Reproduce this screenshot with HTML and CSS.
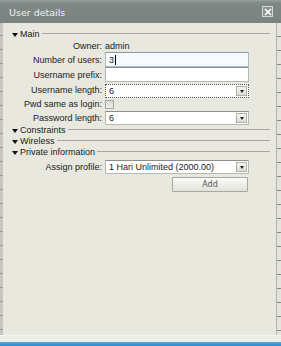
FILE: index.html
```html
<!DOCTYPE html>
<html lang="en">
<head>
    <meta charset="UTF-8">
    <title>User details</title>
    <link rel="stylesheet" href="styles.css">
</head>
<body>
    <div class="screen">
        <div class="dialog">
            <div class="titlebar">
                <span class="title">User details</span>
                <span class="close">
                    <svg width="8" height="8" viewBox="0 0 8 8"><path d="M1 1L7 7M7 1L1 7" stroke="#fff" stroke-width="1.6"/></svg>
                </span>
            </div>
            <div class="frame">
                <div class="edge-left"></div>
                <div class="content">
                    <div class="legend"><span class="arrow"></span>Main</div>
                    <div class="form">
                        <label>Owner:</label>
                        <span class="value">admin</span>

                        <label>Number of users:</label>
                        <div class="input focus">3<span class="caret"></span></div>

                        <label>Username prefix:</label>
                        <div class="input"></div>

                        <label>Username length:</label>
                        <div class="select dotted"><span class="text">6</span><span class="drop"></span></div>

                        <label>Pwd same as login:</label>
                        <span class="check"></span>

                        <label>Password length:</label>
                        <div class="select"><span class="text">6</span><span class="drop"></span></div>
                    </div>

                    <div class="legend"><span class="arrow"></span>Constraints</div>
                    <div class="legend"><span class="arrow"></span>Wireless</div>
                    <div class="legend"><span class="arrow"></span>Private information</div>

                    <div class="form profile">
                        <label>Assign profile:</label>
                        <div class="select"><span class="text">1 Hari Unlimited (2000.00)</span><span class="drop"></span></div>
                    </div>
                    <div class="actions">
                        <button class="btn">Add</button>
                    </div>
                </div>
                <div class="edge-right"></div>
            </div>
            <div class="footer"></div>
        </div>
        <div class="taskbar"></div>
    </div>
</body>
</html>
```

FILE: styles.css
```css
html, body {
    margin: 0;
    padding: 0;
}
body {
    width: 281px;
    height: 346px;
    overflow: hidden;
    font-family: 'Liberation Sans', Arial, sans-serif;
    font-size: 9px;
    color: #1a1a1a;
    background-color: #e8e8df;
}
.screen {
    display: flex;
    flex-direction: column;
    height: 346px;
}
.dialog {
    display: flex;
    flex-direction: column;
    height: 342px;
}
.titlebar {
    height: 23px;
    flex: none;
    display: flex;
    align-items: center;
    justify-content: space-between;
    padding: 0 8px 0 9px;
    background: linear-gradient(#9aa19e 0, #7f8885 3px, #7a8380 100%);
}
.title {
    font-family: 'DejaVu Sans', Verdana, sans-serif;
    font-size: 9.5px;
    color: #f2f2f0;
    margin-top: 1px;
}
.close {
    width: 9px;
    height: 9px;
    border: 1px solid #d4d8d6;
    background-color: #8a928f;
    display: flex;
    align-items: center;
    justify-content: center;
}
.frame {
    flex: 1;
    display: flex;
}
.edge-left {
    width: 3px;
    background: repeating-linear-gradient(#c6c6be 0, #c6c6be 12px, #9a9a92 12px, #9a9a92 13px, #c6c6be 13px, #c6c6be 14px);
}
.edge-right {
    width: 4px;
    border-left: 1px solid #b4b4ac;
    background: repeating-linear-gradient(#e4e4dc 0, #e4e4dc 13px, #8a8a84 13px, #8a8a84 14px);
}
.content {
    flex: 1;
    padding: 7px 6px 0 9px;
    background-color: #e8e8df;
}
.legend {
    height: 11px;
    display: flex;
    align-items: center;
    white-space: nowrap;
    line-height: 11px;
}
.legend:first-child {
    height: 9px;
    margin-bottom: 0;
}
.legend::after {
    content: "";
    flex: 1;
    margin-left: 2px;
    margin-bottom: 3px;
    border-top: 1px solid #a6a69e;
}
.arrow {
    width: 0;
    height: 0;
    border-left: 3px solid transparent;
    border-right: 3px solid transparent;
    border-top: 4px solid #111;
    margin-right: 2px;
}
.form {
    display: grid;
    grid-template-columns: 90px 144px;
    grid-template-rows: 13px 15px 15px 16px 12px 15px;
    column-gap: 3px;
    align-items: center;
}
.form label {
    text-align: right;
    white-space: nowrap;
}
.form.profile {
    grid-template-rows: 15px;
    margin-top: 1px;
}
.value {
    color: #1a1a1a;
}
.input, .select {
    box-sizing: border-box;
    height: 15px;
    border: 1px solid #b6b8b4;
    border-top-color: #8c8e8a;
    background-color: #fff;
    display: flex;
    align-items: center;
    padding-left: 3px;
}
.input {
    height: 15px;
}
.input.focus {
    background-color: #f6fafc;
    border-color: #a8c0cc;
    border-top-color: #8a9aa2;
}
.caret {
    width: 1px;
    height: 10px;
    margin-left: 1px;
    background-color: #000;
}
.select {
    height: 14px;
    align-self: end;
    padding-right: 1px;
}
.select.dotted {
    border: 1px dotted #555;
}
.select .text {
    flex: 1;
    white-space: nowrap;
    overflow: hidden;
}
.drop {
    box-sizing: border-box;
    width: 11px;
    height: 10px;
    border: 1px solid #b0b0aa;
    background: linear-gradient(#f6f6f2, #dcdcd4);
    display: flex;
    align-items: center;
    justify-content: center;
}
.drop::before {
    content: "";
    border-left: 2px solid transparent;
    border-right: 2px solid transparent;
    border-top: 3px solid #222;
}
.check {
    box-sizing: border-box;
    width: 9px;
    height: 9px;
    border: 1px solid #a4a6a2;
    background: linear-gradient(#d8d8d4, #ececea);
}
.actions {
    display: flex;
    justify-content: flex-end;
    padding-right: 22px;
    margin-top: 3px;
}
.btn {
    box-sizing: border-box;
    width: 76px;
    height: 15px;
    padding: 0;
    border: 1px solid #a8a8a2;
    border-radius: 1px;
    background: linear-gradient(#fbfbf9, #e2e2da);
    font-family: 'DejaVu Sans', Verdana, sans-serif;
    font-size: 8px;
    color: #555;
}
.footer {
    height: 6px;
    flex: none;
    background-color: #ecece6;
    border-top: 1px solid #f4f4f0;
}
.taskbar {
    height: 4px;
    background: linear-gradient(#5aa6dc, #2f86c8);
}
```
